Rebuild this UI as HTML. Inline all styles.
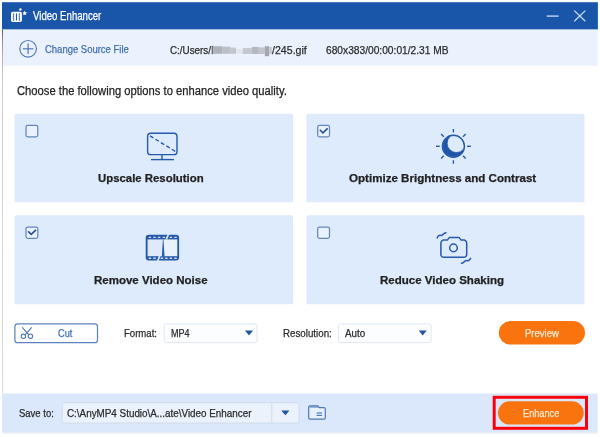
<!DOCTYPE html>
<html>
<head>
<meta charset="utf-8">
<title>Video Enhancer</title>
<style>
html,body{margin:0;padding:0;}
body{width:600px;height:437px;background:#fff;position:relative;overflow:hidden;
 font-family:"Liberation Sans",sans-serif;font-size:11px;color:#333;}
.abs{position:absolute;}
.t{position:absolute;white-space:nowrap;line-height:1;transform-origin:0 50%;-webkit-text-stroke:0.25px currentColor;}
</style>
</head>
<body>

<!-- window chrome, panels, controls and icons (page coordinates) -->
<svg class="abs" style="left:0;top:0" width="600" height="437" viewBox="0 0 600 437">
 <!-- background blocks -->
 <defs><linearGradient id="lb" x1="0" y1="0" x2="0" y2="1"><stop offset="0" stop-color="#5a5a5a"/><stop offset="0.03" stop-color="#8e8e8e"/><stop offset="0.08" stop-color="#b8b8b8"/><stop offset="0.16" stop-color="#cecece"/><stop offset="1" stop-color="#dcdcdc"/></linearGradient></defs>
 <rect x="2" y="2.2" width="595.9" height="27.4" fill="#1956a9"/>
 <rect x="2" y="29.6" width="595.8" height="36.2" fill="#ecf2fd"/>
 <rect x="2" y="29.6" width="1" height="364" fill="url(#lb)"/>
 <rect x="2" y="393.5" width="595.6" height="39" fill="#dbe8fb"/>
 <rect x="3" y="432.5" width="594" height="1" fill="#e3e7ee"/>
 <g fill="#deebfc">
  <rect x="14.6" y="113.8" width="278.4" height="88.5" rx="1.5"/>
  <rect x="306.3" y="113.8" width="278.2" height="88.5" rx="1.5"/>
  <rect x="14.6" y="215.3" width="278.4" height="88.9" rx="1.5"/>
  <rect x="306.3" y="215.3" width="278.2" height="88.9" rx="1.5"/>
 </g>
 <g fill="#fbfdff" stroke="#e0e7f3" stroke-width="1">
  <rect x="164.2" y="323.9" width="92.8" height="18.7" rx="2"/>
  <rect x="338.5" y="323.9" width="92.6" height="18.7" rx="2"/>
 </g>
 <rect x="62.1" y="402.7" width="237" height="20.3" rx="2" fill="#ebf2fc" stroke="#cfdbee" stroke-width="1"/>
 <line x1="271.8" y1="403.2" x2="271.8" y2="422.2" stroke="#cfdbee" stroke-width="1"/>
 <rect x="498.8" y="321" width="86.2" height="23.6" rx="11.8" fill="#f9730f"/>
 <rect x="498" y="401.2" width="85.7" height="23.4" rx="11.7" fill="#f9730f"/>
 <!-- title icon -->
 <rect x="11" y="11.7" width="10.9" height="10.4" rx="1.8" fill="#fff"/>
 <g fill="#1956a9">
  <rect x="15.9" y="13.5" width="1.1" height="6.9"/>
  <rect x="12.9" y="13.5" width="1.2" height="1.2"/><rect x="12.9" y="15.5" width="1.2" height="1.2"/><rect x="12.9" y="17.5" width="1.2" height="1.2"/><rect x="12.9" y="19.4" width="1.2" height="1.2"/>
  <rect x="18.8" y="13.5" width="1.2" height="1.2"/><rect x="18.8" y="15.5" width="1.2" height="1.2"/><rect x="18.8" y="17.5" width="1.2" height="1.2"/><rect x="18.8" y="19.4" width="1.2" height="1.2"/>
 </g>
 <g fill="#1956a9" opacity="0.25">
  <rect x="12.9" y="13.5" width="1.2" height="7.1"/><rect x="18.8" y="13.5" width="1.2" height="7.1"/>
 </g>
 <circle cx="20.4" cy="9.5" r="1.25" fill="#fff"/>
 <path d="M24.7 10.8 l0.75 1.45 1.6 0.25 -1.15 1.15 0.27 1.6 -1.47 -0.76 -1.47 0.76 0.27 -1.6 -1.15 -1.15 1.6 -0.25z" fill="#fff"/>
 <!-- window controls -->
 <line x1="546.8" y1="16.1" x2="558.6" y2="16.1" stroke="#c4d5f0" stroke-width="1.4"/>
 <line x1="574.3" y1="10.6" x2="585.3" y2="21.2" stroke="#d2def3" stroke-width="1.2"/>
 <line x1="585.3" y1="10.6" x2="574.3" y2="21.2" stroke="#d2def3" stroke-width="1.2"/>
 <!-- plus circle -->
 <g stroke="#4f79b7" stroke-width="1.2" fill="none">
  <circle cx="28.1" cy="48.8" r="8.3"/>
  <line x1="28.1" y1="43.6" x2="28.1" y2="54" />
  <line x1="22.9" y1="48.8" x2="33.3" y2="48.8"/>
 </g>
 <!-- blurred name -->
 <defs><filter id="bl" x="-10%" y="-30%" width="120%" height="160%"><feGaussianBlur stdDeviation="0.7"/></filter></defs>
 <g filter="url(#bl)">
  <rect x="211.6" y="45.8" width="1.6" height="8.4" fill="#6e7178"/>
  <rect x="213.2" y="46.2" width="9" height="7.6" fill="#b0b2ba"/>
  <rect x="222.2" y="46.6" width="8" height="7.2" fill="#bdbfc7"/>
  <rect x="230.2" y="47.6" width="6" height="6.2" fill="#c4c6ce"/>
  <rect x="236.2" y="49" width="6.6" height="4.6" fill="#e2e5ed"/>
  <rect x="242.8" y="48" width="9" height="6" fill="#c6c8d0"/>
  <rect x="251.8" y="47" width="7" height="7" fill="#b6b8c0"/>
  <rect x="258.8" y="47.4" width="6" height="6.6" fill="#c2c4cc"/>
  <rect x="264.8" y="46.2" width="4.4" height="10" fill="#a4a6ae"/>
  <rect x="269.2" y="47" width="2.6" height="7" fill="#c6c8d0"/>
 </g>

 <!-- monitor icon -->
 <g stroke="#2659a9" fill="none" stroke-width="1.4">
  <rect x="147.6" y="133.2" width="29.4" height="21.4" rx="3.2"/>
  <line x1="150" y1="135.9" x2="175.2" y2="151.3" stroke-dasharray="3.9 2.5"/>
  <line x1="162" y1="154.6" x2="162" y2="159.6"/>
  <line x1="151" y1="159.6" x2="174" y2="159.6"/>
 </g>
 <!-- brightness icon -->
 <g stroke="#2659a9" stroke-width="1.4" fill="none">
  <circle cx="453.4" cy="146.3" r="11"/>
  <path fill="#1f55a7" stroke="#1f55a7" stroke-width="0.7" d="M450.05 136.56 A10.3 10.3 0 1 0 463.14 149.65 A9.26 9.26 0 1 1 450.05 136.56z"/>
  <line x1="453.4" y1="129" x2="453.4" y2="132.4"/>
  <line x1="453.4" y1="160.2" x2="453.4" y2="163.7"/>
  <line x1="436" y1="146.3" x2="439.7" y2="146.3"/>
  <line x1="467.1" y1="146.3" x2="470.9" y2="146.3"/>
  <line x1="441.1" y1="134.1" x2="443.8" y2="136.8"/>
  <line x1="465.7" y1="134.1" x2="463" y2="136.8"/>
  <line x1="441.1" y1="158.5" x2="443.8" y2="155.8"/>
  <line x1="465.7" y1="158.5" x2="463" y2="155.8"/>
 </g>
 <!-- film icon -->
 <g>
  <rect x="145.7" y="234.8" width="33.4" height="25.7" rx="3.2" fill="#2659a9"/>
  <rect x="147.6" y="239.4" width="15.4" height="16.8" fill="#dfe9f9"/><rect x="163" y="239.4" width="14.3" height="16.8" fill="#e9f1fd"/>
  <g fill="#cfe0f8">
   <rect x="148.6" y="236.7" width="2.6" height="1.3" rx="0.5"/><rect x="153.2" y="236.7" width="2.6" height="1.3" rx="0.5"/><rect x="157.8" y="236.7" width="2.6" height="1.3" rx="0.5"/><rect x="162.6" y="236.7" width="2.6" height="1.3" rx="0.5"/><rect x="169.6" y="236.7" width="2.6" height="1.3" rx="0.5"/><rect x="174.2" y="236.7" width="2.6" height="1.3" rx="0.5"/>
   <rect x="148.6" y="257.6" width="2.6" height="1.3" rx="0.5"/><rect x="153.2" y="257.6" width="2.6" height="1.3" rx="0.5"/><rect x="160.6" y="257.6" width="2.6" height="1.3" rx="0.5"/><rect x="165" y="257.6" width="2.6" height="1.3" rx="0.5"/><rect x="169.6" y="257.6" width="2.6" height="1.3" rx="0.5"/><rect x="174.2" y="257.6" width="2.6" height="1.3" rx="0.5"/>
  </g>
  <polygon points="162.9,239.4 163.5,239.4 164.5,256.4 161.9,256.4" fill="#2659a9"/>
  <polygon points="167.6,234 169.4,234 167.2,239.6 165.4,239.6" fill="#deebfc"/>
  <polygon points="158.8,256 160.6,256 158.6,261 156.8,261" fill="#deebfc"/>
 </g>
 <!-- camera icon -->
 <g stroke="#2659a9" stroke-width="1.5" fill="none" stroke-linejoin="round" stroke-linecap="round">
  <path d="M443.8 240.1 H447.3 L449.2 237.6 H459.2 L461.1 240.1 H463.8 A2.9 2.9 0 0 1 466.7 243 V254.4 A2.9 2.9 0 0 1 463.8 257.3 H443.8 A2.9 2.9 0 0 1 440.9 254.4 V243 A2.9 2.9 0 0 1 443.8 240.1z"/>
  <circle cx="453.5" cy="247.9" r="3.8"/>
  <path d="M437.1 237.9 C438 235.6 439.6 235 441 235.5 C442.6 236 443.2 233 446 232.8"/>
  <path d="M461.5 263.3 C464.3 263.1 464.9 260.1 466.5 260.6 C467.9 261.1 469.5 260.5 470.6 258.4"/>
 </g>
 <!-- checkboxes -->
 <g fill="#eaf2fe" stroke="#6586bd" stroke-width="1.25">
  <rect x="26" y="125.4" width="11.8" height="11.4" rx="1.8"/>
  <rect x="317.7" y="125.4" width="11.8" height="11.4" rx="1.8"/>
  <rect x="26" y="227" width="11.8" height="11.4" rx="1.8"/>
  <rect x="317.7" y="227" width="11.8" height="11.4" rx="1.8"/>
 </g>
 <!-- cut button -->
 <rect x="14.9" y="323.8" width="82.6" height="18.9" rx="2.8" fill="#fff" stroke="#5a82bd" stroke-width="1.2"/>
 <!-- red highlight -->
 <rect x="494.2" y="397.3" width="92.3" height="31" fill="none" stroke="#f9000f" stroke-width="3"/>
 <!-- check marks -->
 <g stroke="#2a4f95" stroke-width="1.6" fill="none">
  <polyline points="319.8,129.8 322.9,132.8 327.7,128.3"/>
  <polyline points="28.1,231.4 31.2,234.4 36,229.9"/>
 </g>
 <!-- scissors -->
 <g stroke="#4f79b7" stroke-width="1.1" fill="none">
  <line x1="22.2" y1="327.3" x2="28.7" y2="334.7"/>
  <line x1="31.8" y1="327.3" x2="25.3" y2="334.7"/>
  <circle cx="23.4" cy="336.3" r="2.2"/>
  <circle cx="30.4" cy="336.2" r="2.2"/>
 </g>
 <!-- dropdown triangles -->
 <g fill="#1f55a7">
  <polygon points="245,330.6 253,330.6 249,335.6"/>
  <polygon points="418.7,330.6 426.7,330.6 422.7,335.6"/>
  <polygon points="281.3,410.4 289.5,410.4 285.4,415.3"/>
 </g>
 <!-- folder icon -->
 <g stroke="#4f79b7" stroke-width="1.2" fill="#e8f0fd">
  <path d="M308.7 408 V407.2 A1.4 1.4 0 0 1 310.1 405.9 H317.8 L319.3 407.6 H323.9 A1.4 1.4 0 0 1 325.3 409 V417.7 A1.4 1.4 0 0 1 323.9 419.1 H310.1 A1.4 1.4 0 0 1 308.7 417.7z"/>
  <path d="M309.5 406.6 H318.2 L319.3 407.6 H309.5z" fill="#4f79b7" stroke="none"/>
  <line x1="316.6" y1="413" x2="322.1" y2="413"/>
  <line x1="316.6" y1="415.4" x2="322.1" y2="415.4"/>
 </g>
</svg>

<div class="t" id="title" style="left:32.9px;top:9.80px;font-size:12px;color:#ffffff;transform:scaleX(0.8018);">Video Enhancer</div>
<div class="t" id="csf" style="left:44.6px;top:44.05px;font-size:11px;color:#3f6fb3;transform:scaleX(0.8618);">Change Source File</div>
<div class="t" id="path1" style="left:170.2px;top:44.65px;font-size:11px;color:#2a2a2a;transform:scaleX(0.8943);">C:/Users/</div>
<div class="t" id="path2" style="left:272.4px;top:44.65px;font-size:11px;color:#2a2a2a;transform:scaleX(0.9642);">/245.gif</div>
<div class="t" id="info" style="left:325.6px;top:44.65px;font-size:11px;color:#2a2a2a;transform:scaleX(0.9280);">680x383/00:00:01/2.31 MB</div>
<div class="t" id="choose" style="left:17.2px;top:85.40px;font-size:12px;color:#222;transform:scaleX(0.9347);">Choose the following options to enhance video quality.</div>
<div class="t" id="l1" style="left:98.2px;top:173.45px;font-size:11px;color:#222;transform:scaleX(1.0345);font-weight:bold;">Upscale Resolution</div>
<div class="t" id="l2" style="left:348.8px;top:173.45px;font-size:11px;color:#222;transform:scaleX(1.0525);font-weight:bold;">Optimize Brightness and Contrast</div>
<div class="t" id="l3" style="left:94.4px;top:274.85px;font-size:11px;color:#222;transform:scaleX(1.0458);font-weight:bold;">Remove Video Noise</div>
<div class="t" id="l4" style="left:380.2px;top:274.85px;font-size:11px;color:#222;transform:scaleX(1.0474);font-weight:bold;">Reduce Video Shaking</div>
<div class="t" id="cutt" style="left:58.2px;top:328.15px;font-size:11px;color:#3f6fb3;transform:scaleX(0.8409);">Cut</div>
<div class="t" id="fmt" style="left:123.8px;top:328.15px;font-size:11px;color:#2a2a2a;transform:scaleX(0.8706);">Format:</div>
<div class="t" id="mp4" style="left:170.6px;top:328.15px;font-size:11px;color:#2a2a2a;transform:scaleX(0.8221);">MP4</div>
<div class="t" id="res" style="left:282.8px;top:328.15px;font-size:11px;color:#2a2a2a;transform:scaleX(0.8865);">Resolution:</div>
<div class="t" id="auto" style="left:345.2px;top:328.15px;font-size:11px;color:#2a2a2a;transform:scaleX(0.8922);">Auto</div>
<div class="t" id="prevt" style="left:525.0px;top:327.65px;font-size:11px;color:#ffe9d0;transform:scaleX(0.8639);">Preview</div>
<div class="t" id="saveto" style="left:19.2px;top:408.35px;font-size:11px;color:#2a2a2a;transform:scaleX(0.8623);">Save to:</div>
<div class="t" id="savep" style="left:66.9px;top:407.65px;font-size:11px;color:#2a2a2a;transform:scaleX(0.8962);">C:\AnyMP4 Studio\A...ate\Video Enhancer</div>
<div class="t" id="enht" style="left:522.5px;top:407.65px;font-size:11px;color:#ffe9d0;transform:scaleX(0.8357);">Enhance</div>
</body>
</html>
